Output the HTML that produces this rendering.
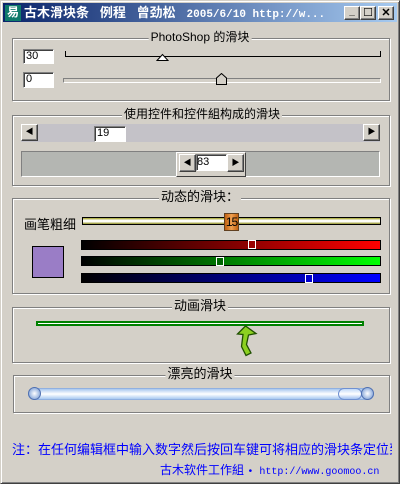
<!DOCTYPE html>
<html><head><meta charset="utf-8"><style>
*{margin:0;padding:0;box-sizing:border-box}
body{width:400px;height:484px;overflow:hidden;background:#d4d0c8;font-family:"Liberation Sans","Noto Sans CJK SC",sans-serif;font-size:12px;position:relative}
.a{position:absolute}
.grp{position:absolute;border:1px solid #808080;box-shadow:1px 1px 0 #fff inset,1px 1px 0 #fff}
.lbl{position:absolute;background:#d4d0c8;padding:0 2px;font-size:12px;line-height:14px;white-space:nowrap;transform:translateX(-50%)}
.edit{position:absolute;background:#fff;border:1px solid;border-color:#808080 #fff #fff #808080;box-shadow:inset 1px 1px 0 #404040;font-size:11px;line-height:13px;padding-left:2px}
.btn{position:absolute;background:#d4d0c8;border:1px solid;border-color:#fff #404040 #404040 #fff;box-shadow:inset -1px -1px 0 #808080;font-size:8px;text-align:center;line-height:14px}
</style></head><body>
<div class="a" style="left:0;top:0;width:400px;height:484px;border:1px solid;border-color:#d4d0c8 #404040 #404040 #d4d0c8;box-shadow:inset 1px 1px 0 #fff,inset -1px -1px 0 #808080"></div>
<div class="a" style="left:3px;top:3px;width:394px;height:19px;background:linear-gradient(90deg,#0a246a,#a6caf0)"></div>
<div class="a" style="left:5px;top:5px;width:16px;height:16px;background:#0e7a6a;color:#fff;font-size:12px;line-height:15px;text-align:center;font-weight:bold">易</div>
<div class="a" style="left:24px;top:4px;width:316px;overflow:hidden;color:#fff;font-weight:bold;font-size:13px;line-height:17px;white-space:nowrap">古木滑块条&nbsp;&nbsp;&nbsp;例程&nbsp;&nbsp;&nbsp;曾劲松&nbsp;&nbsp;&nbsp;<span style="font-family:'Liberation Mono',monospace;font-size:11px">2005/6/10 http://w...</span></div>
<div class="btn" style="left:344px;top:6px;width:16px;height:14px;font-size:10px;line-height:10px;font-weight:bold">_</div>
<div class="btn" style="left:360px;top:6px;width:16px;height:14px;font-size:11px;line-height:12px">☐</div>
<div class="btn" style="left:378px;top:6px;width:16px;height:14px;font-size:11px;line-height:12px;font-weight:bold">✕</div>

<div class="grp" style="left:12px;top:38px;width:378px;height:63px"></div>
<div class="lbl" style="left:200px;top:30px">PhotoShop 的滑块</div>
<div class="edit" style="left:23px;top:49px;width:31px;height:15px">30</div>
<div class="a" style="left:65px;top:56px;width:316px;height:1px;background:#000"></div>
<div class="a" style="left:65px;top:51px;width:1px;height:6px;background:#000"></div>
<div class="a" style="left:380px;top:51px;width:1px;height:6px;background:#000"></div>
<svg class="a" style="left:156px;top:53px" width="13" height="8"><path d="M1 7.5L6.5 1.5L12 7.5Z" fill="#fff" stroke="#000"/></svg>
<div class="edit" style="left:23px;top:72px;width:31px;height:16px">0</div>
<div class="a" style="left:63px;top:78px;width:318px;height:5px;border:1px solid;border-color:#808080 #fff #fff #808080;background:#d4d0c8"></div>
<svg class="a" style="left:216px;top:73px" width="11" height="12"><path d="M0.5 11.5V5L5.5 0.5L10.5 5V11.5Z" fill="#d4d0c8" stroke="#000"/></svg>

<div class="grp" style="left:12px;top:115px;width:378px;height:71px"></div>
<div class="lbl" style="left:202px;top:107px">使用控件和控件組构成的滑块</div>
<div class="a" style="left:21px;top:124px;width:359px;height:18px;background:#c4c2c8"></div>
<div class="btn" style="left:21px;top:124px;width:17px;height:17px">◀</div>
<div class="btn" style="left:363px;top:124px;width:17px;height:17px">▶</div>
<div class="edit" style="left:94px;top:126px;width:32px;height:16px">19</div>
<div class="a" style="left:21px;top:151px;width:359px;height:26px;background:#b4b6b2;border:1px solid;border-color:#808080 #fff #fff #808080"></div>
<div class="a" style="left:176px;top:152px;width:70px;height:25px;background:#d4d0c8;border:1px solid;border-color:#fff #404040 #404040 #fff"></div>
<div class="btn" style="left:179px;top:154px;width:17px;height:18px;line-height:16px">◀</div>
<div class="edit" style="left:196px;top:154px;width:31px;height:17px;line-height:15px;padding-left:0">83</div>
<div class="btn" style="left:227px;top:154px;width:17px;height:18px;line-height:16px">▶</div>

<div class="grp" style="left:12px;top:198px;width:378px;height:96px"></div>
<div class="lbl" style="left:200px;top:190px;font-size:13px">动态的滑块：</div>
<div class="a" style="left:24px;top:214px;font-size:13px">画笔粗细</div>
<div class="a" style="left:82px;top:217px;width:299px;height:8px;background:linear-gradient(#a0a020,#fff 40%,#fff 60%,#909020);border:1px solid #000"></div>
<div class="a" style="left:224px;top:213px;width:15px;height:18px;background:linear-gradient(90deg,#c06010,#f0a050,#c06010);border:1px solid #604020;font-size:12px;line-height:16px;text-align:center;letter-spacing:-1px">15</div>
<div class="a" style="left:32px;top:246px;width:32px;height:32px;background:#9a7dc6;border:1px solid #000"></div>
<div class="a" style="left:81px;top:240px;width:300px;height:10px;background:linear-gradient(90deg,#000,#ff0000);border:1px solid #000"></div>
<div class="a" style="left:81px;top:256px;width:300px;height:10px;background:linear-gradient(90deg,#000,#00ff00);border:1px solid #000"></div>
<div class="a" style="left:81px;top:273px;width:300px;height:10px;background:linear-gradient(90deg,#000,#0000ff);border:1px solid #000"></div>
<div class="a" style="left:248px;top:240px;width:8px;height:9px;border:1px solid #fff;background:#900"></div>
<div class="a" style="left:216px;top:257px;width:8px;height:9px;border:1px solid #fff;background:#060"></div>
<div class="a" style="left:305px;top:274px;width:8px;height:9px;border:1px solid #fff;background:#00c"></div>

<div class="grp" style="left:12px;top:307px;width:378px;height:56px"></div>
<div class="lbl" style="left:200px;top:299px;font-size:13px">动画滑块</div>
<div class="a" style="left:36px;top:321px;width:328px;height:5px;border:1px solid #008000;background:#fff;box-shadow:inset 0 0 0 1px #008000"></div>
<svg class="a" style="left:236px;top:325px" width="22" height="32"><path d="M9.5 1L1.5 9L7 9.5L5.5 21.5L10 30.5L15 28L10.5 19.5L12.5 10L20 8.5Z" fill="#8cd020" stroke="#205000" stroke-width="1.3"/></svg>

<div class="grp" style="left:13px;top:375px;width:377px;height:38px"></div>
<div class="lbl" style="left:200px;top:367px;font-size:13px">漂亮的滑块</div>
<div class="a" style="left:28px;top:388px;width:346px;height:12px;border-radius:6px;background:linear-gradient(#a8c8f0,#fff 50%,#a8c8f0);border:1px solid #90b0e0"></div>
<div class="a" style="left:28px;top:387px;width:13px;height:13px;border-radius:7px;background:radial-gradient(#fff,#6890d0);border:1px solid #5070b0"></div>
<div class="a" style="left:338px;top:388px;width:24px;height:12px;border-radius:6px;background:linear-gradient(#c0d8f8,#fff 50%,#a0c0f0);border:1px solid #7090d0"></div>
<div class="a" style="left:361px;top:387px;width:13px;height:13px;border-radius:7px;background:radial-gradient(#fff,#6890d0);border:1px solid #5070b0"></div>

<div class="a" style="left:12px;top:439px;width:380px;overflow:hidden;color:#0000ff;font-size:13px;white-space:nowrap">注：在任何编辑框中输入数字然后按回车键可将相应的滑块条定位到指定</div>
<div class="a" style="left:160px;top:461px;color:#0000ff;font-size:12px;white-space:nowrap">古木软件工作組 <span style="font-family:'Liberation Mono',monospace;font-size:10px">• http://www.goomoo.cn</span></div>
</body></html>
